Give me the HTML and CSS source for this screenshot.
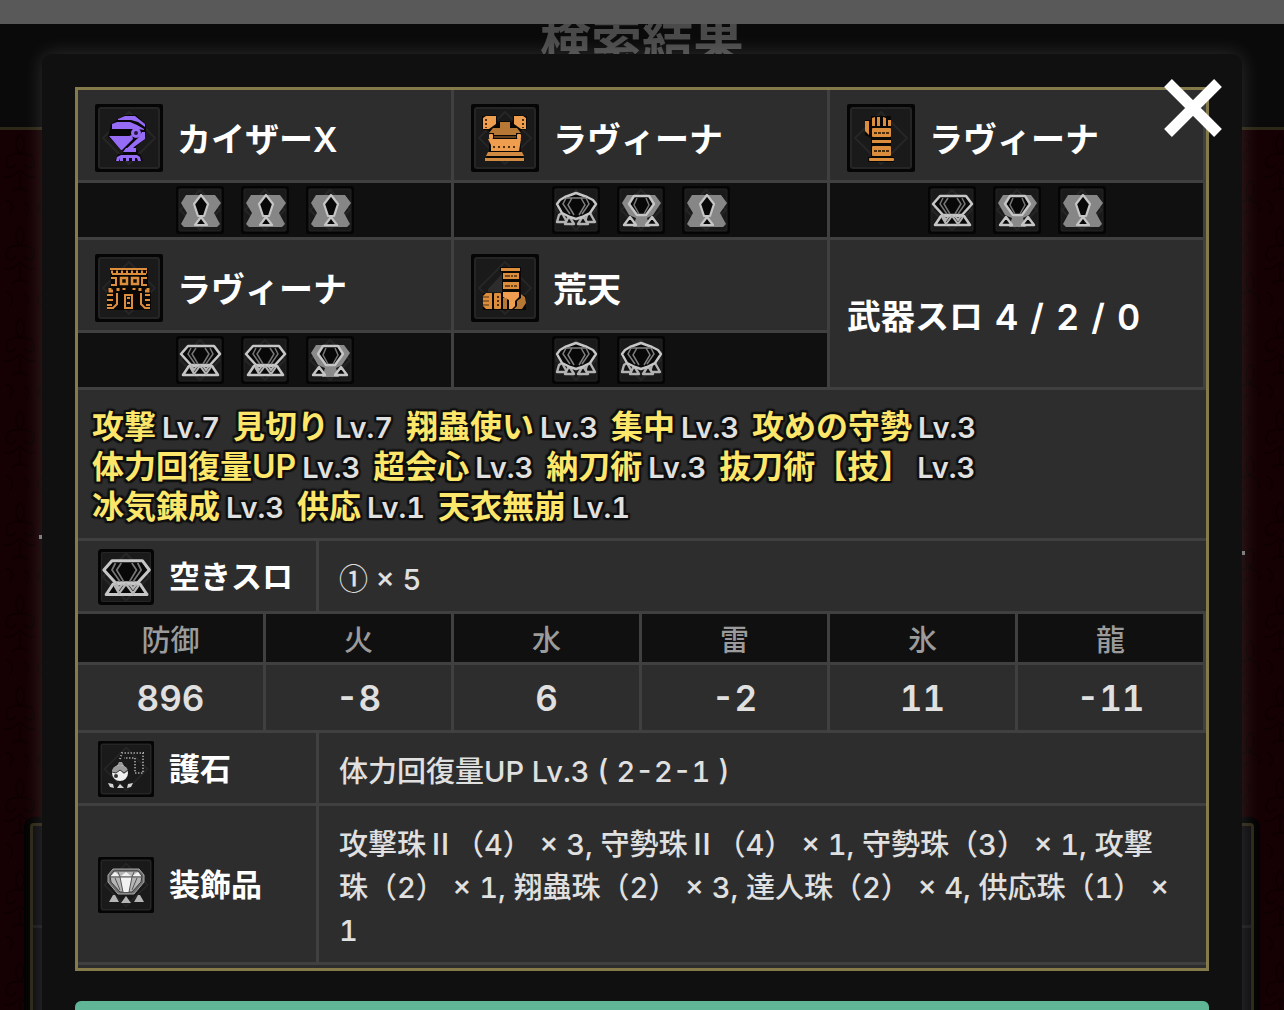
FILE: index.html
```html
<!DOCTYPE html>
<html lang="ja">
<head>
  <meta charset="UTF-8">
  <meta name="viewport" content="width=device-width, initial-scale=1.0">
  <title>検索結果</title>
  <link rel="stylesheet" href="styles.css">
</head>
<body>
  <svg class="sprite" aria-hidden="true">
    <symbol id="frame" viewBox="0 0 68 68">
      <rect width="68" height="68" rx="2" fill="#050505"/>
      <rect x="4" y="4" width="60" height="60" rx="2" fill="#1a1a1a" stroke="#252525" stroke-width="2"/>
      <path d="M34 8L60 34L34 60L8 34Z" fill="none" stroke="#262626" stroke-width="2"/>
    </symbol>

    <symbol id="head" viewBox="0 0 68 68">
      <use href="#frame"/>
      <path d="M22 16L30 11H41L51 20V29L49 36L41 43V46H43V50H45L48 57H20L23 50H28V47L13 33L16 20Z" fill="#08080a"/>
      <g fill="#966bf5">
        <path d="M23 15L30 12H40L50 20V23L43 18L36 16H23Z"/>
        <path d="M17 20L22 18H35L42 21L49 25V26L43 25H17Z"/>
        <path d="M14 32H34L37 31L38 35L27 46H26Z"/>
        <path d="M50 28V35L39 43L36 47H29L43 34L47 28Z"/>
        <path d="M31 44H41V48H28Z"/>
        <path d="M21 57L22 53L26 51H42L45 53L46 57H43L42 54L40 54V57H37V54H34V57H31V54H28V57H25V54L24 57Z"/>
        <circle cx="41" cy="29" r="5"/>
      </g>
      <circle cx="41" cy="29" r="2" fill="#24183d"/>
    </symbol>

    <symbol id="chest" viewBox="0 0 68 68">
      <use href="#frame"/>
      <path d="M11 12L25 11L27 19L29 17H39L41 19L43 11L56 12V25L50 26V49L54 57H14L18 48V27L11 25Z" fill="#0a0806"/>
      <g fill="#ee9e4e">
        <path d="M12 14L15 12H25V20L18 25H12Z"/>
        <path d="M55 14L52 12H43V20L50 25H55Z"/>
        <path d="M17 35H50L48 47H20V41Z"/>
        <rect x="18" y="30" width="4" height="5" rx="1"/>
        <rect x="46" y="30" width="4" height="5" rx="1"/>
      </g>
      <g fill="#d08a42">
        <path d="M17 48H51L53 52H15Z"/>
        <rect x="14" y="54" width="39" height="3"/>
      </g>
      <path d="M29 18H39V24H46L50 29H45V31H23V29H18L22 24H29Z" fill="#b87835"/>
      <path d="M23 33H45" stroke="#b87835" stroke-width="1"/>
      <path d="M22 43H47" stroke="#50300f" stroke-width="2" stroke-dasharray="2 3"/>
      <path d="M15 15V24M52 15V24" stroke="#50300f" stroke-width="2" stroke-dasharray="2 2"/>
    </symbol>

    <symbol id="arm" viewBox="0 0 68 68">
      <use href="#frame"/>
      <path d="M18 16H24V12H44V53H47V58H21V53H24V34L18 31Z" fill="#0a0806"/>
      <g fill="#dd8e3d">
        <path d="M18 17H22V31L18 27ZM25 14L28 13V22H25ZM30 13H33V22H30ZM36 13L39 14V22H36ZM41 16H44V22H41Z"/>
        <rect x="25" y="24" width="19" height="9" rx="1"/>
        <rect x="25" y="36" width="19" height="3"/>
        <rect x="25" y="42" width="19" height="10" rx="1"/>
        <rect x="22" y="54" width="25" height="3" rx="1"/>
      </g>
      <path d="M27 29H43M27 47H43" stroke="#4d2d0c" stroke-width="2" stroke-dasharray="3 1"/>
    </symbol>

    <symbol id="waist" viewBox="0 0 68 68">
      <use href="#frame"/>
      <path d="M15 14H53V31L56 39V56H12V39L16 31Z" fill="#0a0806"/>
      <g fill="none" stroke="#dd8e3d" stroke-width="2">
        <path d="M15 15H52M17 20H51"/>
        <path d="M16 18H52" stroke-width="3" stroke-dasharray="2 3"/>
        <path d="M16 24H21V31H16M52 24H47V31H52"/>
        <path d="M26 24H32V30H26ZM37 24H43V30H37Z" stroke-width="2.5"/>
        <path d="M15 34V37H18M23 34V37M29 34V36M39 34V36M45 34V37M53 34V37H50" stroke-width="3"/>
        <path d="M12 41H18M12 46H18M12 51H17M12 54H18L22 50V39M55 41H50M55 46H50M55 51H51M55 54H50L46 50V39"/>
        <path d="M30 41H37V54H30ZM32 44H35M32 49H35"/>
      </g>
    </symbol>

    <symbol id="foot" viewBox="0 0 68 68">
      <use href="#frame"/>
      <path d="M29 13H50V40L55 42V56H12V39H31V18H29Z" fill="#0a0806"/>
      <path d="M31 20L17 35V38H31Z" fill="#2c2c2c"/>
      <g fill="#dd8e3d">
        <rect x="30" y="14" width="19" height="3"/>
        <rect x="32" y="19" width="16" height="6"/>
        <rect x="32" y="28" width="16" height="7"/>
        <rect x="23" y="39" width="7" height="16" rx="1"/>
        <path d="M15 39H21V55H15L12 52V42Z"/>
      </g>
      <path d="M32 38H48V43L44 47V52L41 55H38V46L32 43Z" fill="#f09f50"/>
      <path d="M32 44H36V55H32Z" fill="#b87835"/>
      <path d="M50 40L54 43L55 49L51 55H43L46 52V47L50 44Z" fill="#b87835"/>
      <path d="M34 22H46M34 32H46" stroke="#754719" stroke-width="2" stroke-dasharray="5 1 2 1"/>
      <path d="M27 42V53" stroke="#50300f" stroke-width="2" stroke-dasharray="2 2"/>
      <path d="M12 43H18M12 47H18M12 51H18" stroke="#50300f" stroke-width="1"/>
    </symbol>

    <symbol id="frame-s" viewBox="0 0 48 48">
      <rect width="48" height="48" rx="3" fill="#050505"/>
      <rect x="3" y="3" width="42" height="42" rx="1" fill="#1a1a1a" stroke="#252525"/>
      <path d="M24 4L44 24L24 44L4 24Z" fill="none" stroke="#262626" stroke-width="2"/>
    </symbol>

    <symbol id="slot1" viewBox="0 0 48 48">
      <use href="#frame-s"/>
      <path d="M10 9H39L45 17L38 27L44 38L41 41H8L5 38L11 27L5 17Z" fill="#868686"/>
      <g fill="#080808" stroke="#c6c6c6" stroke-width="2.2" stroke-linejoin="round">
        <path d="M25 9L32 18L28 30H22L18 18Z"/>
        <path d="M25 31L31 39H19Z"/>
      </g>
    </symbol>

    <symbol id="slot2" viewBox="0 0 48 48">
      <use href="#frame-s"/>
      <path d="M10 9H38L44 17L36 29L30 32L33 41H16L19 32L12 29L5 17Z" fill="#8a8a8a"/>
      <g fill="#080808" stroke="#c6c6c6" stroke-width="2.4" stroke-linejoin="round">
        <path d="M17 10H32L37 18L29 29H20L12 18Z"/>
        <path d="M13 31L19 39H7ZM35 31L41 39H29Z"/>
      </g>
      <path d="M20 12L17 19L22 28M29 12L32 19L27 28" fill="none" stroke="#777" stroke-width="1.5"/>
    </symbol>

    <symbol id="slot3" viewBox="0 0 48 48">
      <use href="#frame-s"/>
      <g fill="#080808" stroke="#c6c6c6" stroke-width="2.6" stroke-linejoin="round">
        <path d="M12 10H38L44 18L34 29H15L5 18Z"/>
        <path d="M13 30H36L42 39H7Z"/>
      </g>
      <path d="M14 31L18 38L24 30L30 38L35 31M15 29L18 34L21 30M27 30L30 34L33 30" fill="none" stroke="#b5b5b5" stroke-width="2"/>
      <path d="M15 12L12 18L19 28M34 12L37 18L30 28M20 12L16 18L22 28M29 12L33 18L27 28" fill="none" stroke="#777" stroke-width="1.5"/>
    </symbol>

    <symbol id="slot4" viewBox="0 0 48 48">
      <use href="#frame-s"/>
      <g fill="#111" stroke="#b2b2b2" stroke-width="2.4" stroke-linejoin="round">
        <path d="M10 27L15 36H5L7 29ZM38 27L43 36H33L35 29Z"/>
        <path d="M17 30L22 38H13ZM31 30L36 38H26Z"/>
        <path d="M24 7L35 11L41 14L44 18L38 27L30 31L24 33L18 31L10 27L5 18L8 14L13 11Z" fill="#080808" stroke="#c6c6c6"/>
      </g>
      <path d="M14 12L11 18L18 28M34 12L37 18L30 28M20 12L16 19L22 29M29 12L33 19L27 29M14 12H34" fill="none" stroke="#808080" stroke-width="1.5"/>
    </symbol>

    <symbol id="charm" viewBox="0 0 56 56">
      <use href="#frame" width="56" height="56"/>
      <path d="M22 18L24 12H45V32H37V17H26" fill="none" stroke="#b5b5b5" stroke-width="2" stroke-dasharray="1 2"/>
      <path d="M21 21H24L26 25H19Z" fill="#999"/>
      <circle cx="22" cy="32" r="8" fill="#f0f0f0"/>
      <path d="M14 30Q15 25 22 24Q29 25 30 30L26 33L22 29L18 32Z" fill="#9b9b9b"/>
      <path d="M14 31L18 32L22 29L26 32L30 29" fill="none" stroke="#333" stroke-width="1"/>
      <circle cx="18" cy="35" r="2" fill="#333"/>
      <path d="M10 42L15 43L16 47L12 46ZM35 42L30 43L29 47L33 46ZM19 47L22 43L26 47Z" fill="#d4d4d4"/>
    </symbol>

    <symbol id="jewel" viewBox="0 0 56 56">
      <use href="#frame" width="56" height="56"/>
      <path d="M15 12H41L46 18V25L36 37H20L10 25V18Z" fill="#6e6e6e" stroke="#a8a8a8" stroke-width="1"/>
      <path d="M16 14H40L44 19L43 25L34 35H22L13 25L12 19Z" fill="#b5b5b5" stroke="#3b3b3b" stroke-width="1"/>
      <path d="M13 19L17 15L22 19ZM23 19L28 15L33 19ZM34 19L40 15L43 19ZM22 20H34L31 35H25Z" fill="#f1f1f1"/>
      <path d="M12 20H44M20 15L22 20L25 35M36 15L34 20L31 35M17 21L22 33M39 21L34 33" fill="none" stroke="#555" stroke-width="1"/>
      <path d="M11 45L15 38H17L21 45ZM23 46L28 39L33 46ZM36 45L40 38H42L46 45Z" fill="#b5b5b5"/>
    </symbol>
  </svg>

  <!-- page behind the modal -->
  <div class="page">
    <div class="topbar"></div>
    <header class="page-header">
      <h1>検索結果</h1>
    </header>
    <svg class="damask" aria-hidden="true">
      <defs>
        <pattern id="damask" width="60" height="92" patternUnits="userSpaceOnUse">
          <g fill="none" stroke="#0e0002" stroke-width="2">
            <path d="M20 4Q12 14 20 24Q28 14 20 4M20 24Q6 22 6 34Q10 42 16 34M20 24Q34 22 34 34Q30 42 24 34"/>
            <path d="M20 40Q10 50 4 46M20 40Q30 50 36 46M20 44V60M12 62Q20 54 28 62"/>
            <path d="M50 50Q42 60 50 70Q58 60 50 50M50 70Q38 70 38 80Q42 88 48 80M50 70Q60 72 59 82"/>
            <path d="M44 8Q54 14 46 22Q40 28 48 34M6 70Q16 74 10 84M24 72Q32 76 26 86"/>
          </g>
        </pattern>
      </defs>
      <rect width="100%" height="100%" fill="url(#damask)"/>
    </svg>
    <div class="back-lines"></div>
    <div class="back-card">
      <div class="back-card-inner">
        <div class="back-card-row"></div>
      </div>
    </div>
  </div>

  <div class="modal" role="dialog" aria-label="装備詳細">
    <button class="close" type="button" aria-label="閉じる">
      <svg viewBox="0 0 58 58"><path d="M4 4L54 54M54 4L4 54" stroke="#fff" stroke-width="11"/></svg>
    </button>

    <section class="result">
      <div class="armor-grid">
        <div class="armor">
          <div class="armor-name"><svg><use href="#head"/></svg>カイザーX</div>
          <div class="slots">
            <svg><use href="#slot1"/></svg><svg><use href="#slot1"/></svg><svg><use href="#slot1"/></svg>
          </div>
        </div>
        <div class="armor">
          <div class="armor-name"><svg><use href="#chest"/></svg>ラヴィーナ</div>
          <div class="slots">
            <svg><use href="#slot4"/></svg><svg><use href="#slot2"/></svg><svg><use href="#slot1"/></svg>
          </div>
        </div>
        <div class="armor">
          <div class="armor-name"><svg><use href="#arm"/></svg>ラヴィーナ</div>
          <div class="slots">
            <svg><use href="#slot3"/></svg><svg><use href="#slot2"/></svg><svg><use href="#slot1"/></svg>
          </div>
        </div>
        <div class="armor">
          <div class="armor-name"><svg><use href="#waist"/></svg>ラヴィーナ</div>
          <div class="slots">
            <svg><use href="#slot3"/></svg><svg><use href="#slot3"/></svg><svg><use href="#slot2"/></svg>
          </div>
        </div>
        <div class="armor">
          <div class="armor-name"><svg><use href="#foot"/></svg>荒天</div>
          <div class="slots">
            <svg><use href="#slot4"/></svg><svg><use href="#slot4"/></svg>
          </div>
        </div>
        <div class="weapon">
          <span>武器スロ</span>
          <span class="num">4</span><span class="num">/</span><span class="num">2</span><span class="num">/</span><span class="num">0</span>
        </div>
      </div>

      <ul class="skills">
        <li><b>攻撃</b><span>Lv.7</span></li>
        <li><b>見切り</b><span>Lv.7</span></li>
        <li><b>翔蟲使い</b><span>Lv.3</span></li>
        <li><b>集中</b><span>Lv.3</span></li>
        <li><b>攻めの守勢</b><span>Lv.3</span></li>
        <li><b>体力回復量UP</b><span>Lv.3</span></li>
        <li><b>超会心</b><span>Lv.3</span></li>
        <li><b>納刀術</b><span>Lv.3</span></li>
        <li><b>抜刀術【技】</b><span>Lv.3</span></li>
        <li><b>冰気錬成</b><span>Lv.3</span></li>
        <li><b>供応</b><span>Lv.1</span></li>
        <li><b>天衣無崩</b><span>Lv.1</span></li>
      </ul>

      <div class="row">
        <div class="row-label"><svg><use href="#slot3"/></svg>空きスロ</div>
        <div class="row-value"><span class="jp">①</span> × 5</div>
      </div>

      <table class="defense">
        <thead>
          <tr><th>防御</th><th>火</th><th>水</th><th>雷</th><th>氷</th><th>龍</th></tr>
        </thead>
        <tbody>
          <tr><td>896</td><td>-8</td><td>6</td><td>-2</td><td>11</td><td>-11</td></tr>
        </tbody>
      </table>

      <div class="row">
        <div class="row-label"><svg><use href="#charm"/></svg>護石</div>
        <div class="row-value">体力回復量UP Lv.3 ( 2-2-1 )</div>
      </div>
      <div class="row">
        <div class="row-label"><svg><use href="#jewel"/></svg>装飾品</div>
        <div class="row-value">攻撃珠<span class="jp">Ⅱ</span>（4） × 3, 守勢珠<span class="jp">Ⅱ</span>（4） × 1, 守勢珠（3） × 1, 攻撃珠（2） × 1, 翔蟲珠（2） × 3, 達人珠（2） × 4, 供応珠（1） × 1</div>
      </div>
    </section>

    <button class="action" type="button" aria-label="保存"></button>
  </div>
</body>
</html>
```

FILE: styles.css
```css
* {
  box-sizing: border-box;
}
body {
  margin: 0;
  height: 100vh;
  overflow: hidden;
  background-color: #150003;
  color: #e0e0e0;
  font-family: Inter, "Noto Sans CJK JP", sans-serif;
  font-weight: 500;
  font-variant-numeric: tabular-nums;
}
button {
  border: none;
  padding: 0;
  cursor: pointer;
}
svg {
  display: block;
  flex: none;
}
.sprite {
  position: absolute;
  width: 0;
  height: 0;
}
.jp {
  font-family: "Noto Sans CJK JP", sans-serif;
  line-height: 1;
}

/* page behind the modal */
.page {
  display: flex;
  flex-direction: column;
  height: 100vh;
}
.topbar {
  height: 24px;
  flex: none;
  background-color: #595959;
  z-index: 1;
}
.page-header {
  height: 106px;
  flex: none;
  background-color: #0a0a0a;
  border-bottom: 3px solid #2c2716;
  text-align: center;
}
.page-header h1 {
  margin: -20px 0 0;
  font-size: 51px;
  line-height: 76px;
  color: #4a4a4a;
}
.damask {
  width: 100%;
  flex: 1;
}
.back-lines::before,
.back-lines::after {
  content: "";
  position: absolute;
  width: 3px;
  height: 4px;
  background-color: #777;
}
.back-lines::before {
  top: 535px;
  left: 39px;
}
.back-lines::after {
  top: 551px;
  right: 39px;
}
.back-card {
  position: absolute;
  top: 817px;
  bottom: 0;
  left: 24px;
  right: 24px;
  border: 6px solid #030303;
  border-bottom: none;
  border-radius: 10px 10px 0 0;
  background-color: #0e0e10;
}
.back-card-inner {
  height: 100%;
  border: 3px solid #2c2716;
  border-bottom: none;
  border-radius: 4px 4px 0 0;
}
.back-card-row {
  height: 102px;
  border-bottom: 3px solid #1a1a1c;
}

/* modal */
.modal {
  position: fixed;
  top: 54px;
  left: 42px;
  right: 42px;
  padding: 33px;
  border-radius: 10px;
  background-color: #101010;
  box-shadow: 0 0 20px rgba(255, 255, 255, 0.15);
}
.close {
  position: absolute;
  top: 25px;
  right: 20px;
  width: 58px;
  height: 58px;
  background: none;
}
.action {
  display: block;
  width: 100%;
  height: 80px;
  margin-top: 30px;
  border-radius: 6px;
  background-color: #60b597;
}

.result {
  border: 3px solid #857a4a;
  padding-bottom: 3px;
  background-color: #2d2d2d;
}
.armor-grid {
  display: grid;
  grid-template-columns: repeat(3, 1fr);
  color: #fff;
  font-size: 34px;
  font-weight: 600;
}
.armor,
.weapon {
  border-right: 3px solid #404040;
  border-bottom: 3px solid #404040;
}
.armor-name {
  display: flex;
  align-items: flex-start;
  gap: 14px;
  padding: 14px 17px 4px;
  line-height: 72px;
}
.armor-name svg {
  width: 68px;
  height: 68px;
}
.slots {
  display: grid;
  grid-template-columns: repeat(3, 48px);
  justify-content: center;
  gap: 17px;
  padding: 3px 0;
  border-top: 3px solid #404040;
  background-color: #101010;
}
.slots svg {
  width: 48px;
  height: 48px;
}
.weapon {
  display: flex;
  align-items: center;
  gap: 12px;
  padding: 7px 17px 0;
  line-height: 44px;
}
.num {
  font-size: 36px;
}

.skills {
  display: flex;
  flex-wrap: wrap;
  column-gap: 13px;
  margin: 0;
  padding: 17px 60px 11px 14px;
  list-style: none;
  line-height: 40px;
  border-bottom: 3px solid #404040;
  text-shadow: 2px 0 1px #101010, -2px 0 1px #101010, 0 2px 1px #101010, 0 -2px 1px #101010,
    2px 2px 1px #101010, -2px -2px 1px #101010, 2px -2px 1px #101010, -2px 2px 1px #101010;
}
.skills li {
  display: flex;
  align-items: baseline;
  gap: 6px;
  height: 40px;
}
.skills b {
  font-size: 32px;
  font-weight: 600;
  color: #fce76b;
}
.skills span {
  font-size: 29px;
  font-weight: 600;
}

.row {
  display: grid;
  grid-template-columns: 241px 1fr;
  border-bottom: 3px solid #404040;
}
.row-label {
  display: flex;
  align-items: center;
  gap: 15px;
  padding: 8px 0 6px 20px;
  border-right: 3px solid #404040;
  color: #fff;
  font-size: 31px;
  font-weight: 600;
  line-height: 56px;
}
.row-label svg {
  width: 56px;
  height: 56px;
}
.row-value {
  align-self: center;
  padding: 17px 32px 10px 20px;
  font-size: 29px;
  line-height: 43px;
}

.defense {
  width: 100%;
  table-layout: fixed;
  border-collapse: separate;
  border-spacing: 0;
  text-align: center;
}
.defense th,
.defense td {
  padding: 0;
  border-right: 3px solid #404040;
  border-bottom: 3px solid #404040;
}
.defense th {
  height: 51px;
  background-color: #101010;
  color: #9b9b9b;
  font-size: 29px;
  font-weight: 500;
}
.defense td {
  height: 68px;
  font-size: 35px;
  font-weight: 600;
}
```
